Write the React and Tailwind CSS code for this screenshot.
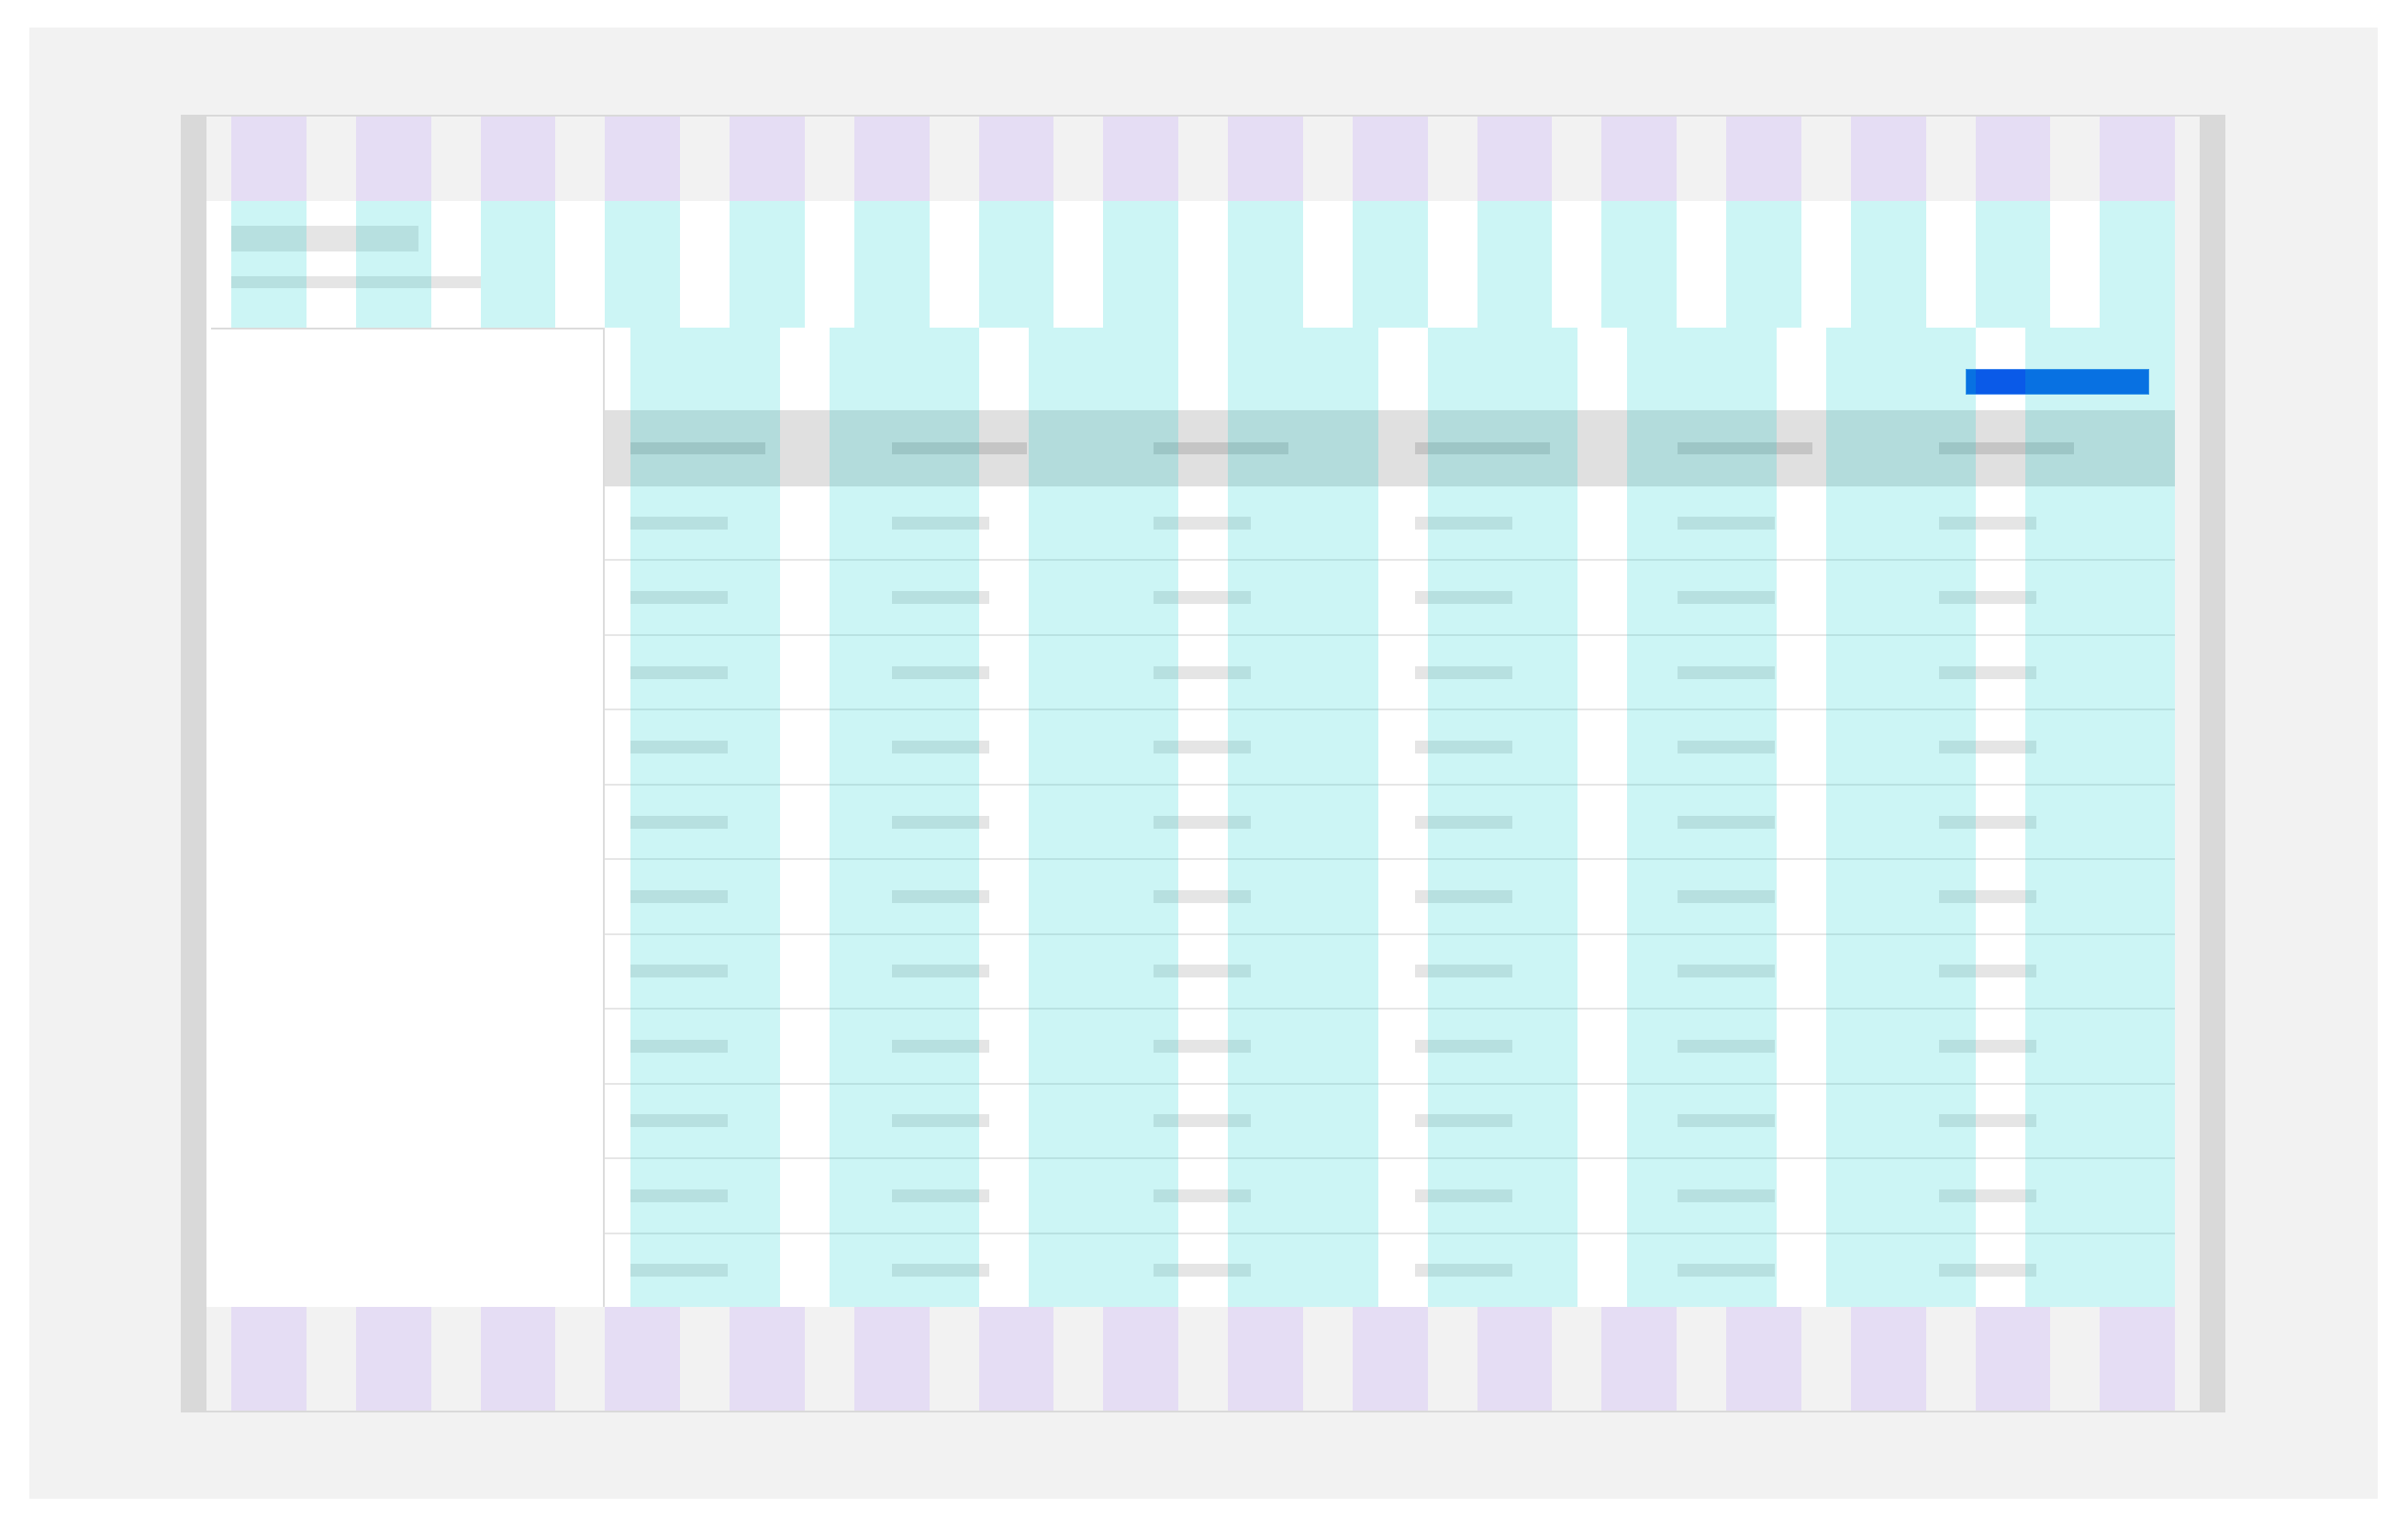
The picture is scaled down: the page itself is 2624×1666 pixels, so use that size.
import React from 'react'

const ROWS = Array.from({ length: 11 }, (_, i) => i)
const COLS = [0, 1, 2, 3, 4, 5]

// Column guides drawn over a container
function Guides({ count, tone, className }) {
  const n = Array.from({ length: count }, (_, i) => i)
  const grid = count === 16 ? 'grid-cols-16' : 'grid-cols-8'
  const fill = tone === 'purple' ? 'bg-[rgba(153,102,255,0.15)]' : 'bg-[rgba(0,204,204,0.2)]'
  return (
    <div className={`pointer-events-none absolute inset-y-0 z-10 grid gap-x-[54px] ${grid} ${className}`}>
      {n.map((i) => (
        <div key={i} className={fill} />
      ))}
    </div>
  )
}

export default function App() {
  return (
    <div className="w-[2624px] h-[1666px] bg-white pt-[30px] pl-[32px]">
      <div className="w-[2559px] h-[1603px] bg-[#f2f2f2] pt-[95px] pl-[165px]">
        <div className="w-[2228px] h-[1414px] flex flex-col bg-[#f2f2f2] border-[#d9d9d9] border-l-[28px] border-r-[28px] border-y-2">
          {/* Top bar */}
          <div className="relative h-[92px] shrink-0">
            <Guides count={16} tone="purple" className="left-[27px] right-[27px]" />
          </div>

          <div className="mr-[27px] bg-white">
            {/* Page header */}
            <div className="relative h-[138px] pl-[27px] pt-[27px]">
              <div className="w-[204px] h-[28px] bg-[#e5e5e5]" />
              <div className="mt-[27px] w-[272px] h-[13px] bg-[#e5e5e5]" />
              <Guides count={16} tone="cyan" className="left-[27px] right-0" />
            </div>

            {/* Body */}
            <div className="flex h-[1067px]">
              <aside className="ml-[5px] w-[429px] shrink-0 bg-white border-t-2 border-r-2 border-[#dcdcdc]" />

              <main className="relative flex-1 flex flex-col">
                <div className="h-[90px] shrink-0 flex items-end justify-end pr-[28px] pb-[17px]">
                  <button className="w-[200px] h-[28px] bg-[#0a5ae8] border border-[#3d85ee]" />
                </div>

                <div className="flex-1 flex flex-col">
                  <div className="h-[83px] shrink-0 grid grid-cols-6 items-center bg-[#e0e0e0]">
                    {COLS.map((c) => (
                      <div key={c} className="pl-[28px]">
                        <div className="w-[147px] h-[13px] bg-[#c5c5c5]" />
                      </div>
                    ))}
                  </div>
                  {ROWS.map((r) => (
                    <div
                      key={r}
                      className={`flex-1 grid grid-cols-6 items-center ${r < ROWS.length - 1 ? 'border-b-2 border-[#e6e6e6]' : ''}`}
                    >
                      {COLS.map((c) => (
                        <div key={c} className="pl-[28px]">
                          <div className="w-[106px] h-[14px] bg-[#e5e5e5]" />
                        </div>
                      ))}
                    </div>
                  ))}
                </div>

                <Guides count={8} tone="cyan" className="left-[28px] right-0" />
              </main>
            </div>
          </div>

          {/* Bottom bar */}
          <div className="relative h-[113px] shrink-0">
            <Guides count={16} tone="purple" className="left-[27px] right-[27px]" />
          </div>
        </div>
      </div>
    </div>
  )
}
